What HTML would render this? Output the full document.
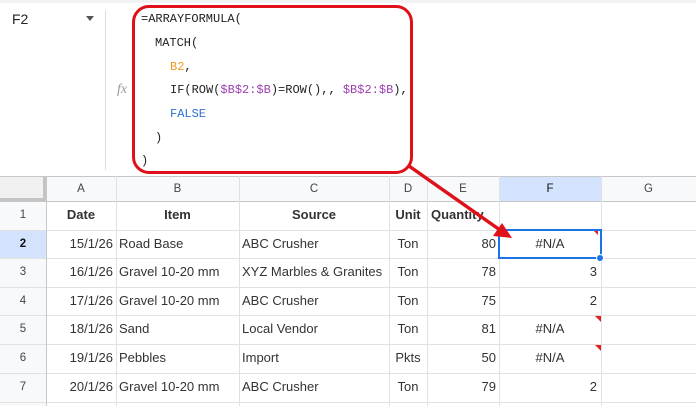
<!DOCTYPE html>
<html><head><style>
body{margin:0;width:696px;height:406px;overflow:hidden;background:#fff;font-family:"Liberation Sans",Arial,sans-serif;position:relative}
.a{position:absolute}
.hl{position:absolute;height:1px;background:#e1e1e1;left:0;width:696px}
.vl{position:absolute;width:1px;background:#e1e1e1}
.c{position:absolute;font-size:13px;color:#333;white-space:nowrap;line-height:28px}
.h{position:absolute;font-size:11.5px;color:#444;text-align:center;line-height:24px}
.f{position:absolute;font-family:"Liberation Mono",monospace;font-size:12px;color:#222;white-space:pre}
.p{color:#9c3fb2}.o{color:#f29a1a}.b{color:#2d6fd6}
.tri{position:absolute;width:0;height:0;border-top:6px solid #d22;border-left:6px solid transparent}
</style></head><body>
<div class="a" style="left:0;top:0;width:696px;height:3px;background:#f1f3f4"></div>
<div class="a" style="left:12px;top:11px;font-size:14px;color:#222">F2</div>
<div class="a" style="left:86px;top:16px;border-top:5px solid #555;border-left:4px solid transparent;border-right:4px solid transparent"></div>
<div class="a" style="left:105px;top:10px;width:1px;height:160px;background:#ddd"></div>
<div class="a" style="left:117px;top:82px;font-family:'Liberation Serif',serif;font-style:italic;font-size:14px;color:#999">fx</div>
<div class="f" style="left:141px;top:12px">=ARRAYFORMULA(</div>
<div class="f" style="left:155px;top:36px">MATCH(</div>
<div class="f" style="left:170px;top:60px"><span class="o">B2</span>,</div>
<div class="f" style="left:170px;top:83px">IF(ROW(<span class="p">$B$2:$B</span>)=ROW(),, <span class="p">$B$2:$B</span>),</div>
<div class="f" style="left:170px;top:107px"><span class="b">FALSE</span></div>
<div class="f" style="left:155px;top:131px">)</div>
<div class="f" style="left:141px;top:154px">)</div>
<div class="a" style="left:132px;top:5px;width:275px;height:163px;border:3px solid #e0101a;border-radius:17px"></div>

<div class="a" style="left:0;top:176px;width:696px;height:25px;background:#f8f9fa"></div>
<div class="a" style="left:0;top:176px;width:46px;height:230px;background:#f8f9fa"></div>
<div class="a" style="left:0;top:176px;width:46px;height:25px;background:#f1f1f1;border-right:3px solid #c4c4c4;border-bottom:3px solid #c4c4c4;box-sizing:border-box"></div>
<div class="a" style="left:499px;top:176px;width:102px;height:25px;background:#d3e3fd"></div>
<div class="a" style="left:0;top:230px;width:46px;height:28px;background:#d3e3fd"></div>
<div class="hl" style="top:176px;background:#c7c7c7"></div>
<div class="hl" style="top:201px;background:#c7c7c7"></div>
<div class="hl" style="top:230px"></div><div class="hl" style="top:258px"></div><div class="hl" style="top:287px"></div><div class="hl" style="top:315px"></div><div class="hl" style="top:344px"></div><div class="hl" style="top:373px"></div><div class="hl" style="top:402px"></div>
<div class="vl" style="left:46px;top:176px;height:230px;background:#c7c7c7"></div>
<div class="vl" style="left:116px;top:176px;height:230px"></div>
<div class="vl" style="left:239px;top:176px;height:230px"></div>
<div class="vl" style="left:389px;top:176px;height:230px"></div>
<div class="vl" style="left:427px;top:176px;height:230px"></div>
<div class="vl" style="left:499px;top:176px;height:230px"></div>
<div class="vl" style="left:601px;top:176px;height:230px"></div>

<div class="h" style="left:46px;top:177px;width:70px">A</div>
<div class="h" style="left:116px;top:177px;width:123px">B</div>
<div class="h" style="left:239px;top:177px;width:150px">C</div>
<div class="h" style="left:389px;top:177px;width:38px">D</div>
<div class="h" style="left:427px;top:177px;width:72px">E</div>
<div class="h" style="left:499px;top:177px;width:102px;color:#111">F</div>
<div class="h" style="left:601px;top:177px;width:95px">G</div>

<div class="h" style="left:0;top:203px;width:46px">1</div>
<div class="h" style="left:0;top:232px;width:46px;font-weight:bold;color:#111">2</div>
<div class="h" style="left:0;top:260px;width:46px">3</div>
<div class="h" style="left:0;top:289px;width:46px">4</div>
<div class="h" style="left:0;top:317px;width:46px">5</div>
<div class="h" style="left:0;top:346px;width:46px">6</div>
<div class="h" style="left:0;top:375px;width:46px">7</div>

<div class="c" style="left:46px;top:201px;width:70px;text-align:center;font-weight:bold">Date</div>
<div class="c" style="left:116px;top:201px;width:123px;text-align:center;font-weight:bold">Item</div>
<div class="c" style="left:239px;top:201px;width:150px;text-align:center;font-weight:bold">Source</div>
<div class="c" style="left:389px;top:201px;width:38px;text-align:center;font-weight:bold">Unit</div>
<div class="c" style="left:431px;top:201px;font-weight:bold">Quantity</div>

<div class="c" style="left:46px;top:230px;width:67px;text-align:right">15/1/26</div>
<div class="c" style="left:119px;top:230px">Road Base</div>
<div class="c" style="left:242px;top:230px">ABC Crusher</div>
<div class="c" style="left:389px;top:230px;width:38px;text-align:center">Ton</div>
<div class="c" style="left:427px;top:230px;width:69px;text-align:right">80</div>
<div class="c" style="left:499px;top:230px;width:102px;text-align:center">#N/A</div>

<div class="c" style="left:46px;top:258px;width:67px;text-align:right">16/1/26</div>
<div class="c" style="left:119px;top:258px">Gravel 10-20 mm</div>
<div class="c" style="left:242px;top:258px">XYZ Marbles &amp; Granites</div>
<div class="c" style="left:389px;top:258px;width:38px;text-align:center">Ton</div>
<div class="c" style="left:427px;top:258px;width:69px;text-align:right">78</div>
<div class="c" style="left:499px;top:258px;width:98px;text-align:right">3</div>

<div class="c" style="left:46px;top:287px;width:67px;text-align:right">17/1/26</div>
<div class="c" style="left:119px;top:287px">Gravel 10-20 mm</div>
<div class="c" style="left:242px;top:287px">ABC Crusher</div>
<div class="c" style="left:389px;top:287px;width:38px;text-align:center">Ton</div>
<div class="c" style="left:427px;top:287px;width:69px;text-align:right">75</div>
<div class="c" style="left:499px;top:287px;width:98px;text-align:right">2</div>

<div class="c" style="left:46px;top:315px;width:67px;text-align:right">18/1/26</div>
<div class="c" style="left:119px;top:315px">Sand</div>
<div class="c" style="left:242px;top:315px">Local Vendor</div>
<div class="c" style="left:389px;top:315px;width:38px;text-align:center">Ton</div>
<div class="c" style="left:427px;top:315px;width:69px;text-align:right">81</div>
<div class="c" style="left:499px;top:315px;width:102px;text-align:center">#N/A</div>

<div class="c" style="left:46px;top:344px;width:67px;text-align:right">19/1/26</div>
<div class="c" style="left:119px;top:344px">Pebbles</div>
<div class="c" style="left:242px;top:344px">Import</div>
<div class="c" style="left:389px;top:344px;width:38px;text-align:center">Pkts</div>
<div class="c" style="left:427px;top:344px;width:69px;text-align:right">50</div>
<div class="c" style="left:499px;top:344px;width:102px;text-align:center">#N/A</div>

<div class="c" style="left:46px;top:373px;width:67px;text-align:right">20/1/26</div>
<div class="c" style="left:119px;top:373px">Gravel 10-20 mm</div>
<div class="c" style="left:242px;top:373px">ABC Crusher</div>
<div class="c" style="left:389px;top:373px;width:38px;text-align:center">Ton</div>
<div class="c" style="left:427px;top:373px;width:69px;text-align:right">79</div>
<div class="c" style="left:499px;top:373px;width:98px;text-align:right">2</div>

<div class="tri" style="left:595px;top:316px"></div>
<div class="tri" style="left:595px;top:345px"></div>
<div class="a" style="left:498px;top:229px;width:104px;height:30px;border:2px solid #1a73e8;box-sizing:border-box"></div>
<div class="tri" style="left:594px;top:231px;border-top-width:4px;border-left-width:4px"></div>
<div class="a" style="left:596px;top:254px;width:8px;height:8px;border-radius:50%;background:#1a73e8;border:1px solid #fff;box-sizing:border-box"></div>

<svg class="a" style="left:0;top:0" width="696" height="406">
<line x1="409" y1="166" x2="500" y2="230" stroke="#e0101a" stroke-width="3.5"/>
<polygon points="512,238 493,236 502,223" fill="#e0101a"/>
</svg>
</body></html>
